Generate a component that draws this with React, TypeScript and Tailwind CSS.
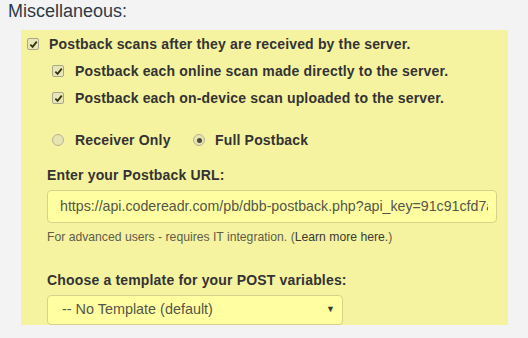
const font = { fontFamily: '"Liberation Sans", Arial, sans-serif' }

function Check() {
  return (
    <span className="flex h-[12px] w-[12px] shrink-0 items-center justify-center rounded-[2px] border border-[#a9a78a] bg-[#e9e7b8]">
      <svg viewBox="0 0 10 10" className="h-[9px] w-[9px]">
        <path d="M1.5 5.2 L4 7.6 L8.6 1.8" fill="none" stroke="#34330f" strokeWidth="2" />
      </svg>
    </span>
  )
}

function Radio({ checked }: { checked?: boolean }) {
  return (
    <span className="flex h-[12px] w-[12px] shrink-0 items-center justify-center rounded-full border border-[#b5b394] bg-[#e6e4b0]">
      {checked && <span className="h-[5px] w-[5px] rounded-full bg-[#4a4a38]" />}
    </span>
  )
}

export default function App() {
  return (
    <div className="h-[338px] w-[528px] overflow-hidden bg-[#f3f3f3] pt-px text-[#333]" style={font}>
      <h2 className="pl-2 text-[18px] leading-[20px] text-[#2e3a48]">Miscellaneous:</h2>
      <div className="ml-[21px] mt-[9px] h-[295px] w-[487px] bg-[#f6f3a0] pt-1 text-[14px] font-bold tracking-[0.17px]">
        <label className="flex h-5 items-center gap-[10px] pl-[6px]">
          <Check />
          Postback scans after they are received by the server.
        </label>
        <label className="mt-[7px] flex h-5 items-center gap-[11px] pl-[31px]">
          <Check />
          Postback each online scan made directly to the server.
        </label>
        <label className="mt-[7px] flex h-5 items-center gap-[11px] pl-[31px]">
          <Check />
          Postback each on-device scan uploaded to the server.
        </label>
        <div className="mt-[22px] flex h-5 items-center pl-[31px]">
          <label className="flex w-[141px] items-center gap-[11px]">
            <Radio />
            Receiver Only
          </label>
          <label className="flex items-center gap-[10px]">
            <Radio checked />
            Full Postback
          </label>
        </div>
        <div className="pl-[26px]">
          <div className="mt-[15px] flex h-5 items-center">Enter your Postback URL:</div>
          <div className="mt-[5px] flex h-[33px] w-[450px] items-center overflow-hidden whitespace-nowrap rounded-[4px] border border-[#d6d28c] bg-[#ffffa2] pl-[12px] pr-[8px] text-[14.2px] font-normal tracking-normal text-[#555548]">
            <span className="overflow-hidden">https://api.codereadr.com/pb/dbb-postback.php?api_key=91c91cfd7a3e</span>
          </div>
          <div className="mt-[6px] flex h-4 items-center text-[12.2px] font-normal tracking-normal text-[#5e5d48]">
            For advanced users - requires IT integration. (<span className="text-[#3a3a30]">Learn more here.</span>)
          </div>
          <div className="mt-[25px] flex h-5 items-center">Choose a template for your POST variables:</div>
          <div className="mt-[5px] flex h-[30px] w-[296px] items-center justify-between rounded-[4px] border border-[#d6d28c] bg-[#ffffa2] pl-[14px] pr-[7px] text-[14.4px] font-normal tracking-normal text-[#555548]">
            <span>-- No Template (default)</span>
            <span className="text-[9px] text-[#3a3a2a]">▼</span>
          </div>
        </div>
      </div>
    </div>
  )
}
